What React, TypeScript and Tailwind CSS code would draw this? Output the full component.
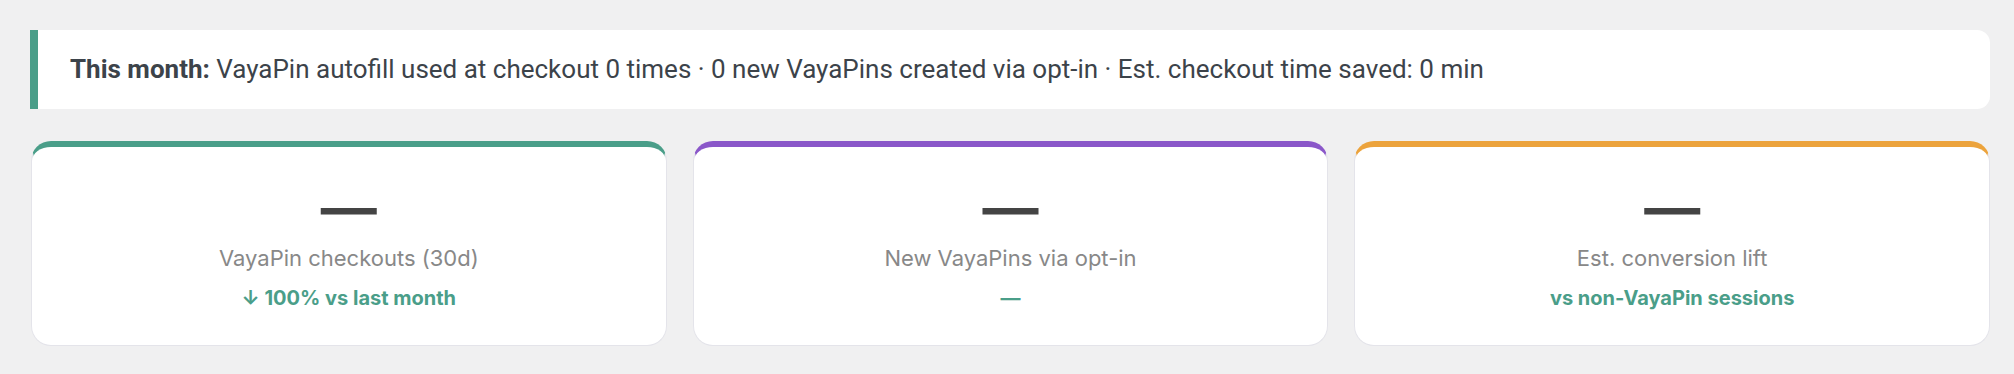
import React from "react";

type Card = { label: string; sub: string; color: string };

const cards: Card[] = [
  { label: "VayaPin checkouts (30d)", sub: "↓ 100% vs last month", color: "green" },
  { label: "New VayaPins via opt-in", sub: "—", color: "purple" },
  { label: "Est. conversion lift", sub: "vs non-VayaPin sessions", color: "orange" },
];

function StatCard({ card }: { card: Card }) {
  const top =
    card.color === "green"
      ? "border-t-[#4a9e89]"
      : card.color === "purple"
      ? "border-t-[#8a57c9]"
      : "border-t-[#eca33c]";
  return (
    <div
      className={`h-[205px] bg-white rounded-[20px] border border-[#e4e4ea] border-t-[6px] ${top} flex flex-col items-center pt-[33px]`}
      style={{ fontFamily: "Inter, 'Noto Sans', sans-serif" }}
    >
      <div className="text-[56px] leading-[56px] font-bold text-[#444444]">—</div>
      <div className="mt-[7px] text-[22px] leading-[30px] text-[#888888]">{card.label}</div>
      <div className="mt-[11px] text-[20px] leading-[28px] font-bold text-[#4a9e89]">{card.sub}</div>
    </div>
  );
}

export default function App() {
  return (
    <div
      className="w-full min-h-[374px] bg-[#f0f0f1] pl-[30px] pr-[24px] pt-[30px]"
      style={{ fontFamily: "Roboto, 'Noto Sans', sans-serif" }}
    >
      <div className="h-[79px] bg-white border-l-[8px] border-[#4a9e89] rounded-r-[13px] flex items-center pl-[32px] text-[26px] text-[#3c434a] whitespace-nowrap">
        <span className="font-bold">This month:</span>
        <span>&nbsp;VayaPin autofill used at checkout 0 times · 0 new VayaPins created via opt-in · Est. checkout time saved: 0 min</span>
      </div>
      <div className="mt-[32px] grid grid-cols-3 gap-[26px] pl-[1px]">
        {cards.map((c) => (
          <StatCard key={c.label} card={c} />
        ))}
      </div>
    </div>
  );
}
